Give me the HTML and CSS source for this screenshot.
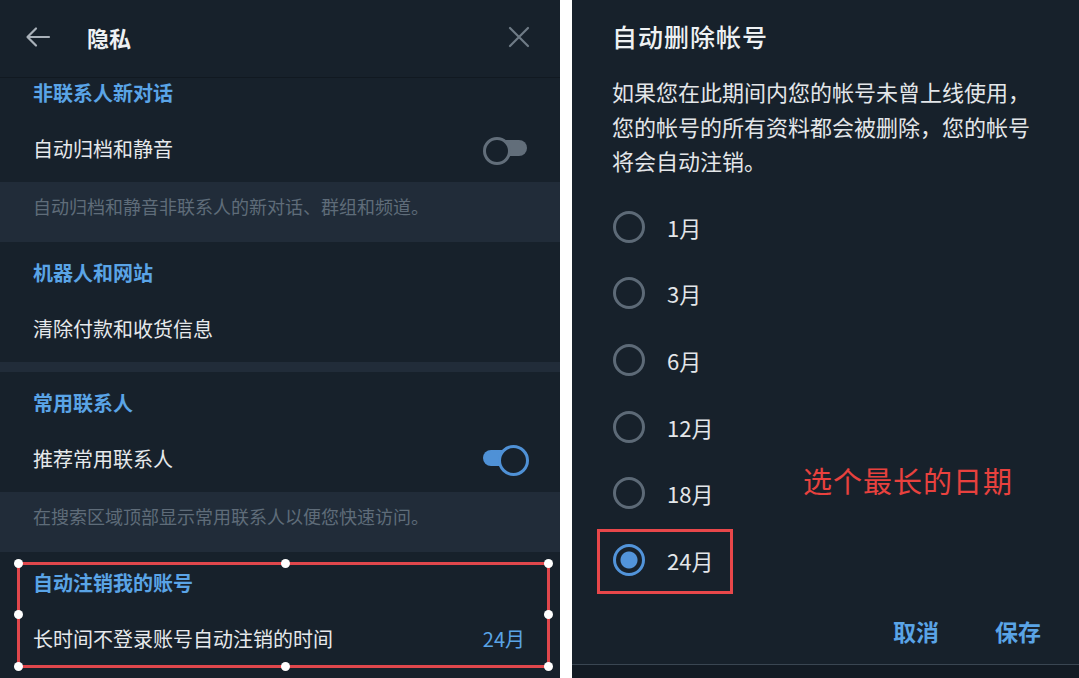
FILE: index.html
```html
<!DOCTYPE html>
<html lang="zh-CN">
<head>
  <meta charset="UTF-8">
  <meta name="viewport" content="width=device-width, initial-scale=1.0">
  <title>隐私 - 自动删除帐号</title>
  <link rel="stylesheet" href="styles.css">
</head>
<body>
  <div class="page">
    <!-- 左侧：隐私设置 -->
    <div class="privacy">
      <div class="head">
        <svg class="head-icon" width="26" height="22" viewBox="0 0 26 22">
          <path d="M24 11H3M11 2.5L2.5 11L11 19.5" fill="none" stroke="#a9b1b9" stroke-width="2.2" stroke-linecap="round" stroke-linejoin="round"/>
        </svg>
        <span class="head-title">隐私</span>
        <svg class="head-close" width="22" height="22" viewBox="0 0 22 22">
          <path d="M2 2L20 20M20 2L2 20" fill="none" stroke="#6f7b86" stroke-width="2.2" stroke-linecap="round"/>
        </svg>
      </div>

      <div class="section first">
        <div class="sec-title">非联系人新对话</div>
        <div class="row">
          <span>自动归档和静音</span>
          <span class="switch"></span>
        </div>
      </div>
      <div class="note">自动归档和静音非联系人的新对话、群组和频道。</div>

      <div class="section">
        <div class="sec-title">机器人和网站</div>
        <div class="row">
          <span>清除付款和收货信息</span>
        </div>
      </div>
      <div class="divider"></div>

      <div class="section">
        <div class="sec-title">常用联系人</div>
        <div class="row">
          <span>推荐常用联系人</span>
          <span class="switch on"></span>
        </div>
      </div>
      <div class="note">在搜索区域顶部显示常用联系人以便您快速访问。</div>

      <div class="section">
        <div class="sec-title">自动注销我的账号</div>
        <div class="row">
          <span>长时间不登录账号自动注销的时间</span>
          <span class="value">24月</span>
        </div>
      </div>

      <!-- 标注框 -->
      <div class="mark">
        <i class="dot tl"></i><i class="dot tc"></i><i class="dot tr"></i>
        <i class="dot ml"></i><i class="dot mr"></i>
        <i class="dot bl"></i><i class="dot bc"></i><i class="dot br"></i>
      </div>
    </div>

    <!-- 右侧：自动删除帐号弹窗 -->
    <div class="right">
      <div class="dialog">
        <div class="dlg-title">自动删除帐号</div>
        <p class="dlg-text">如果您在此期间内您的帐号未曾上线使用，<br>您的帐号的所有资料都会被删除，您的帐号<br>将会自动注销。</p>

        <ul class="options">
          <li><span class="radio"></span>1月</li>
          <li><span class="radio"></span>3月</li>
          <li><span class="radio"></span>6月</li>
          <li><span class="radio"></span>12月</li>
          <li><span class="radio"></span>18月</li>
          <li><span class="radio checked"></span>24月</li>
        </ul>

        <div class="btns">
          <span class="btn">取消</span>
          <span class="btn">保存</span>
        </div>

        <div class="tip">选个最长的日期</div>
        <div class="tip-box"></div>
      </div>
      <div class="under"></div>
    </div>
  </div>
</body>
</html>
```

FILE: styles.css
```css
* {
  box-sizing: border-box;
}
body {
  margin: 0;
  background-color: #fff;
  font-family: "Noto Sans CJK SC", "Noto Sans", sans-serif;
}
.page {
  display: flex;
  width: 1079px;
  height: 678px;
  overflow: hidden;
}

/* 左侧 */
.privacy {
  position: relative;
  width: 560px;
  height: 678px;
  background-color: #17212b;
  color: #e6e9ec;
  overflow: hidden;
}
.head {
  display: flex;
  align-items: center;
  height: 78px;
  padding: 0 30px 4px 25px;
  border-bottom: 1px solid #111921;
}
.head-title {
  margin-left: 36px;
  font-size: 22px;
  font-weight: 700;
  color: #eef1f3;
}
.head-close {
  margin-left: auto;
}
.section {
  padding: 18px 33px 6px;
}
.section.first {
  padding-top: 2px;
}
.sec-title {
  height: 26px;
  line-height: 26px;
  margin-bottom: 14px;
  font-size: 20px;
  font-weight: 700;
  color: #5aa4e6;
}
.row {
  display: flex;
  align-items: center;
  justify-content: space-between;
  height: 56px;
  font-size: 20px;
}
.value {
  color: #5aa4e6;
  margin-right: 2px;
}
.note {
  height: 60px;
  padding: 10px 33px 0;
  line-height: 28px;
  font-size: 18px;
  color: #5f6c79;
  background-color: #212c39;
}
.divider {
  height: 10px;
  background-color: #212c39;
}

/* 开关 */
.switch {
  position: relative;
  width: 44px;
  height: 26px;
}
.switch::before {
  content: '';
  position: absolute;
  left: 10px;
  right: 0;
  top: 5px;
  height: 16px;
  border-radius: 8px;
  background-color: #626e7a;
}
.switch::after {
  content: '';
  position: absolute;
  left: 0;
  top: 2px;
  width: 22px;
  height: 22px;
  border-radius: 50%;
  border: 3px solid #626e7a;
  background-color: #17212b;
}
.switch.on::before {
  left: 0;
  right: 10px;
  background-color: #4f91d6;
}
.switch.on::after {
  left: auto;
  right: -2px;
  top: 0;
  width: 25px;
  height: 25px;
  border-color: #4f91d6;
}

/* 标注框 */
.mark {
  position: absolute;
  left: 17px;
  top: 562px;
  width: 533px;
  height: 106px;
  border: 3px solid #e0474c;
}
.dot {
  position: absolute;
  width: 9px;
  height: 9px;
  border-radius: 50%;
  background-color: #fff;
}
.dot.tl { left: -6px; top: -6px; }
.dot.tc { left: 261px; top: -6px; }
.dot.tr { right: -6px; top: -6px; }
.dot.ml { left: -6px; top: 45px; }
.dot.mr { right: -6px; top: 45px; }
.dot.bl { left: -6px; bottom: -6px; }
.dot.bc { left: 261px; bottom: -6px; }
.dot.br { right: -6px; bottom: -6px; }

/* 右侧弹窗 */
.right {
  display: flex;
  flex-direction: column;
  width: 507px;
  height: 678px;
  margin-left: 12px;
  background-color: #141c25;
}
.dialog {
  position: relative;
  height: 665px;
  padding: 20px 38px 0 40px;
  background-color: #17212b;
  color: #e6e9ec;
  border-bottom: 1px solid #3a4652;
}
.under {
  flex: 1;
  background-color: #131b24;
}
.dlg-title {
  height: 32px;
  line-height: 32px;
  font-size: 25px;
  font-weight: 500;
  letter-spacing: 1px;
  color: #eef1f3;
}
.dlg-text {
  margin: 22px 0 0;
  font-size: 22px;
  line-height: 34.5px;
  white-space: nowrap;
  color: #e3e6e9;
}
.options {
  list-style: none;
  margin: 16px 0 0;
  padding: 0;
}
.options li {
  display: flex;
  align-items: center;
  height: 66.6px;
  font-size: 22px;
  color: #e3e6e9;
}
.radio {
  width: 32px;
  height: 32px;
  margin: 0 22px 0 1px;
  border-radius: 50%;
  border: 3px solid #5d6a77;
}
.radio.checked {
  border-color: #5294da;
  background: radial-gradient(circle, #5294da 0 8px, transparent 9px);
}
.btns {
  display: flex;
  justify-content: flex-end;
  gap: 56px;
  margin-top: 23px;
}
.btn {
  line-height: 30px;
  font-size: 23px;
  font-weight: 700;
  color: #5aa4e6;
}
.tip {
  position: absolute;
  left: 231px;
  top: 462px;
  line-height: 36px;
  font-size: 29px;
  letter-spacing: 1px;
  color: #e8413e;
}
.tip-box {
  position: absolute;
  left: 25px;
  top: 529px;
  width: 136px;
  height: 65px;
  border: 3px solid #e8474a;
}
```
